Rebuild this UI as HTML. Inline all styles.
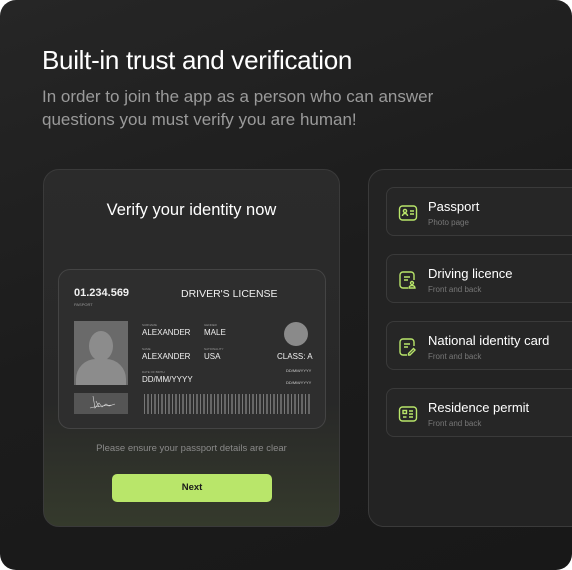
<!DOCTYPE html>
<html><head><style>
*{margin:0;padding:0;box-sizing:border-box}
body{width:572px;height:570px;background:#fff;font-family:"Liberation Sans",sans-serif;overflow:hidden}
.wrap{position:absolute;left:0;top:0;width:572px;height:570px;border-radius:16px;background:linear-gradient(160deg,#262626 0%,#1c1c1c 50%,#181818 100%);overflow:hidden}
h1{position:absolute;left:42px;top:45px;color:#fff;font-size:26px;font-weight:400;letter-spacing:-0.3px}
.sub{position:absolute;left:42px;top:85px;color:#9a9a9a;font-size:17px;line-height:23px;width:440px}
.card{position:absolute;left:43px;top:169px;width:297px;height:358px;border-radius:16px;border:1px solid #3a3a3a;background:linear-gradient(180deg,#2b2b2b 0%,#282828 65%,#353a2c 100%)}
.card h2{position:absolute;left:0;right:0;top:31px;text-align:center;color:#fff;font-size:16.5px;font-weight:400}
.id{position:absolute;left:14px;top:99px;width:268px;height:160px;border-radius:12px;background:#2e2e2e;border:1px solid #444;color:#f0f0f0}
.t{position:absolute;font-size:8px}
.s{position:absolute;font-size:3px;color:#999}
.note{position:absolute;left:0;right:0;top:273px;text-align:center;color:#8a8a8a;font-size:9.5px}
.btn{position:absolute;left:68px;top:304px;width:160px;height:28px;border-radius:5px;background:#b9e66a;color:#1a1a1a;font-size:9.5px;font-weight:700;text-align:center;line-height:28px}
.card2{position:absolute;left:368px;top:169px;width:230px;height:358px;border-radius:16px;border:1px solid #3a3a3a;background:#232323}
.it{position:absolute;left:17px;width:220px;height:49px;border-radius:8px;border:1px solid #3a3a3a;background:#262626}
.it svg{position:absolute;left:11px;top:15px}
.it b{position:absolute;left:41px;top:11px;color:#fff;font-size:13px;font-weight:400}
.it i{position:absolute;left:41px;top:30px;color:#777;font-size:8px;font-style:normal}
</style></head><body><div class="wrap">
<h1>Built-in trust and verification</h1>
<div class="sub">In order to join the app as a person who can answer questions you must verify you are human!</div>
<div class="card">
<h2>Verify your identity now</h2>
<div class="id">
<div class="t" style="left:15px;top:17px;font-size:11px;font-weight:700">01.234.569</div>
<div class="s" style="left:15px;top:32px;font-size:4px">PASPORT</div>
<div class="t" style="left:122px;top:18px;font-size:10.5px">DRIVER'S LICENSE</div>
<div style="position:absolute;left:15px;top:51px;width:54px;height:64px;background:#6a6a6a;overflow:hidden">
<div style="position:absolute;left:15px;top:10px;width:24px;height:30px;border-radius:50%;background:#8c8c8c"></div>
<div style="position:absolute;left:2px;top:38px;width:50px;height:40px;border-radius:20px 20px 0 0;background:#8c8c8c"></div></div>
<div style="position:absolute;left:15px;top:123px;width:54px;height:21px;background:#555"><svg width="54" height="21" viewBox="0 0 54 21" fill="none" stroke="#ddd" stroke-width="0.6"><path d="M19 3l2 12 4-5 3 4 4-3 3 2 6-2M16 15c6-2 14-2 22-3M22 8l3 6"/></svg></div>
<div class="s" style="left:83px;top:53px">SURNAME</div><div class="t" style="left:83px;top:58px">ALEXANDER</div>
<div class="s" style="left:145px;top:53px">GENDER</div><div class="t" style="left:145px;top:58px">MALE</div>
<div class="s" style="left:83px;top:77px">NAME</div><div class="t" style="left:83px;top:82px">ALEXANDER</div>
<div class="s" style="left:145px;top:77px">NATIONALITY</div><div class="t" style="left:145px;top:82px">USA</div>
<div class="s" style="left:83px;top:100px">DATE OF BIRTH</div><div class="t" style="left:83px;top:105px">DD/MM/YYYY</div>
<div style="position:absolute;left:225px;top:52px;width:24px;height:24px;border-radius:50%;background:#8a8a8a"></div>
<div class="t" style="left:218px;top:82px">CLASS: A</div>
<div class="s" style="left:227px;top:98px;font-size:4px;color:#ccc">DD/MM/YYYY</div>
<div class="s" style="left:227px;top:110px;font-size:4px;color:#ccc">DD/MM/YYYY</div>
<div style="position:absolute;left:85px;top:124px;width:168px;height:20px;background:repeating-linear-gradient(90deg,#777 0 1px,transparent 1px 3px,#666 3px 5px,transparent 5px 7px)"></div>
</div>
<div class="note">Please ensure your passport details are clear</div>
<div class="btn">Next</div>
</div>
<div class="card2">
<div class="it" style="top:17px"><svg width="20" height="20" viewBox="0 0 20 20" fill="none" stroke="#b9e66a" stroke-width="1.4"><rect x="1.5" y="3" width="17" height="14" rx="3"/><circle cx="7" cy="8" r="1.6"/><path d="M4.5 13c0-1.5 1-2.5 2.5-2.5s2.5 1 2.5 2.5M12 8h4M12 11h4"/></svg><b>Passport</b><i>Photo page</i></div>
<div class="it" style="top:84px"><svg width="20" height="20" viewBox="0 0 20 20" fill="none" stroke="#b9e66a" stroke-width="1.4"><path d="M10 18H5a3 3 0 0 1-3-3V5a3 3 0 0 1 3-3h8a3 3 0 0 1 3 3v5M6 7h6M6 10h4"/><circle cx="14" cy="13" r="1.5"/><path d="M11 18c0-1.5 1.3-2.5 3-2.5s3 1 3 2.5z"/></svg><b>Driving licence</b><i>Front and back</i></div>
<div class="it" style="top:151px"><svg width="20" height="20" viewBox="0 0 20 20" fill="none" stroke="#b9e66a" stroke-width="1.4"><path d="M9 18H5a3 3 0 0 1-3-3V5a3 3 0 0 1 3-3h8a3 3 0 0 1 3 3v4M6 7h6M6 10h4M12 18l5-5-1.5-1.5-5 5V18z"/></svg><b>National identity card</b><i>Front and back</i></div>
<div class="it" style="top:218px"><svg width="20" height="20" viewBox="0 0 20 20" fill="none" stroke="#b9e66a" stroke-width="1.4"><rect x="1.5" y="3" width="17" height="14" rx="3"/><rect x="5" y="6.5" width="3.5" height="3"/><path d="M5 13h3.5M11 7h4M11 10h4M11 13h4"/></svg><b>Residence permit</b><i>Front and back</i></div>
</div>
</div></body></html>
